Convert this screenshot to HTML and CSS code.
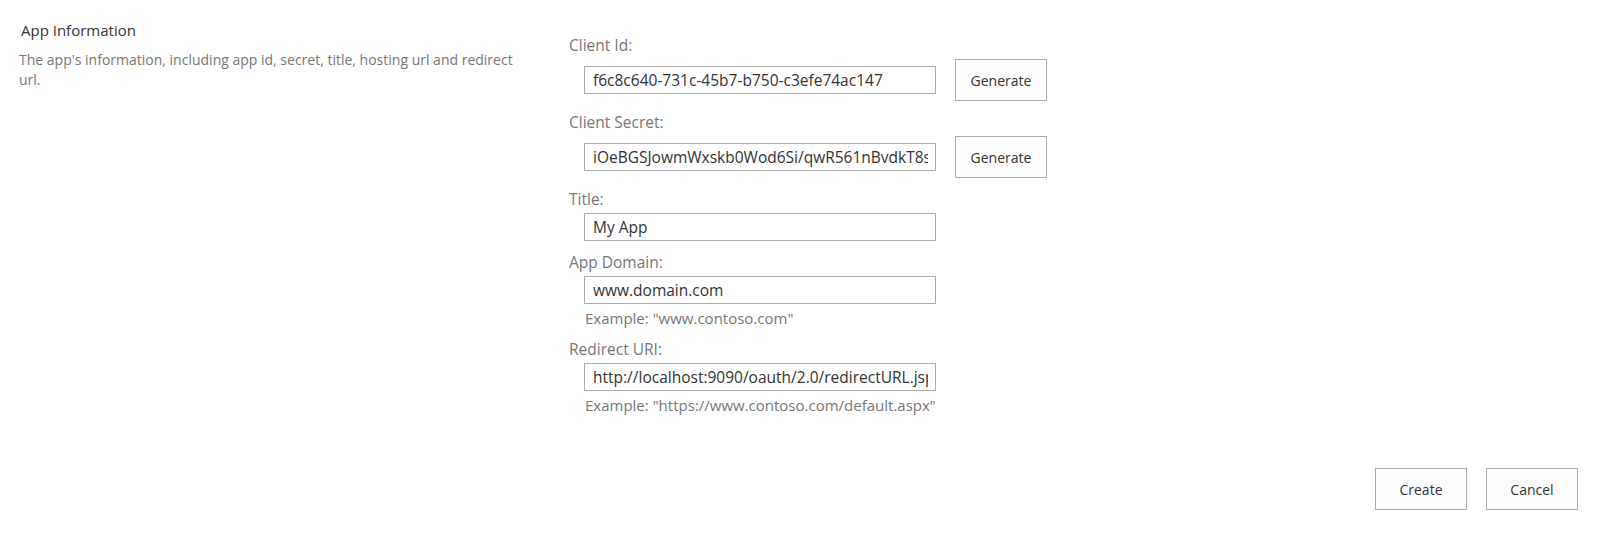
FILE: index.html
```html
<!DOCTYPE html>
<html lang="en">
<head>
<meta charset="UTF-8">
<title>App Information</title>
<link rel="stylesheet" href="styles.css">
</head>
<body>
    <div class="form-page">
        <div class="section">
            <!-- Left: section description -->
            <div class="section-info">
                <h3 class="section-title">App Information</h3>
                <p class="section-desc">The app's information, including app id, secret, title, hosting url and redirect url.</p>
            </div>

            <!-- Right: fields -->
            <div class="section-fields">
                <div class="field">
                    <label class="field-label" for="clientId">Client Id:</label>
                    <div class="field-row">
                        <input class="text-input" id="clientId" type="text" value="f6c8c640-731c-45b7-b750-c3efe74ac147">
                        <button class="btn">Generate</button>
                    </div>
                </div>

                <div class="field">
                    <label class="field-label" for="clientSecret">Client Secret:</label>
                    <div class="field-row">
                        <input class="text-input" id="clientSecret" type="text" value="iOeBGSJowmWxskb0Wod6Si/qwR561nBvdkT8sQ4=">
                        <button class="btn">Generate</button>
                    </div>
                </div>

                <div class="field">
                    <label class="field-label" for="title">Title:</label>
                    <div class="field-control">
                        <input class="text-input" id="title" type="text" value="My App">
                    </div>
                </div>

                <div class="field">
                    <label class="field-label" for="domain">App Domain:</label>
                    <div class="field-control">
                        <input class="text-input" id="domain" type="text" value="www.domain.com">
                        <div class="field-hint">Example: "www.contoso.com"</div>
                    </div>
                </div>

                <div class="field">
                    <label class="field-label" for="redirect">Redirect URI:</label>
                    <div class="field-control">
                        <input class="text-input" id="redirect" type="text" value="http://localhost:9090/oauth/2.0/redirectURL.jsp">
                        <div class="field-hint">Example: "https://www.contoso.com/default.aspx"</div>
                    </div>
                </div>
            </div>
        </div>

        <!-- Form buttons -->
        <div class="form-actions">
            <button class="btn">Create</button>
            <button class="btn">Cancel</button>
        </div>
    </div>
</body>
</html>
```

FILE: styles.css
```css
body, html {
    margin: 0;
    padding: 0;
    font-family: "Open Sans", "Noto Sans", sans-serif;
    color: #333;
    background: #fff;
}

.section {
    display: flex;
}

.section-info {
    width: 500px;
    margin-left: 19px;
    padding-top: 20px;
}

.section-title {
    margin: 0;
    padding-left: 2px;
    font-size: 15px;
    font-weight: normal;
    line-height: 20px;
    color: #333;
}

.section-desc {
    margin: 10px 0 0;
    font-size: 14px;
    line-height: 20px;
    color: #777;
}

.section-fields {
    margin-left: 50px;
    padding-top: 35px;
}

.field {
    margin-bottom: 11px;
}

.field-label {
    display: block;
    font-size: 15.5px;
    line-height: 20px;
    margin-bottom: 4px;
    color: #777;
}

.field-row {
    display: flex;
    align-items: center;
    gap: 19px;
    padding-left: 15px;
}

.field-control {
    padding-left: 15px;
}

.text-input {
    box-sizing: border-box;
    width: 352px;
    height: 28px;
    padding: 0 7px 0 8px;
    border: 1px solid #ababab;
    font-family: inherit;
    font-size: 15.5px;
    color: #333;
    outline: none;
}

.field-hint {
    margin-top: 4px;
    padding-left: 1px;
    font-size: 15px;
    line-height: 20px;
    color: #777;
}

.btn {
    box-sizing: border-box;
    width: 92px;
    height: 42px;
    border: 1px solid #ababab;
    background: #fdfdfd;
    font-family: inherit;
    font-size: 14px;
    color: #333;
    cursor: pointer;
}

.btn:hover {
    background: #f4f4f4;
}

.form-actions {
    display: flex;
    justify-content: flex-end;
    gap: 19px;
    margin-top: 42px;
    padding-right: 25px;
}
```
